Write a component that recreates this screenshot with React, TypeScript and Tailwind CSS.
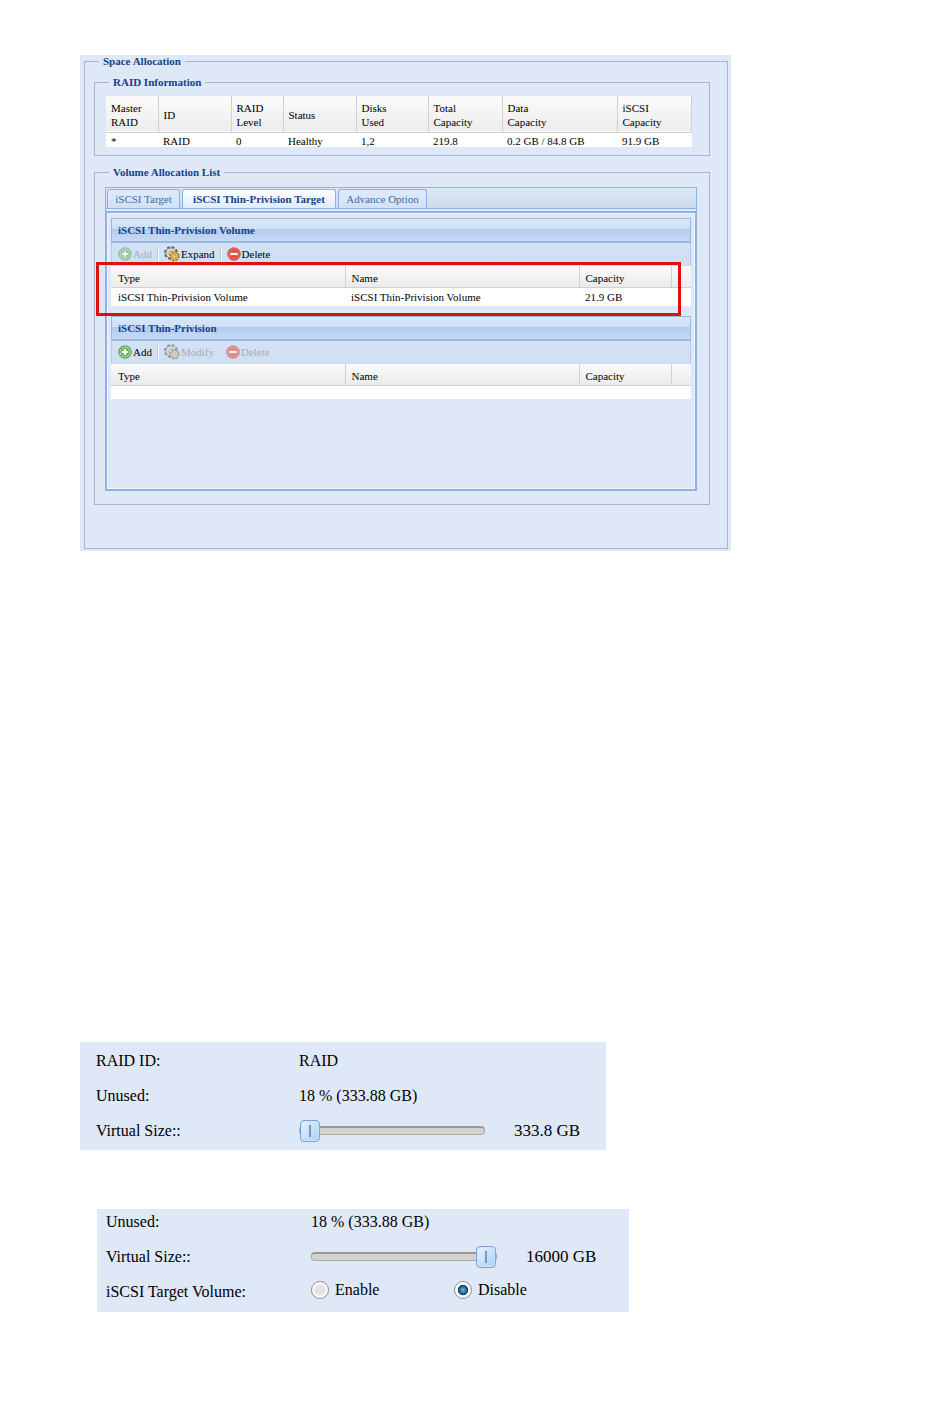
import { useState, type ReactNode } from "react";

const raidColumns = [
  { title: ["Master", "RAID"], value: "*", width: "w-[52px]" },
  { title: ["ID"], value: "RAID", width: "w-[73px]" },
  { title: ["RAID", "Level"], value: "0", width: "w-[52px]" },
  { title: ["Status"], value: "Healthy", width: "w-[73px]" },
  { title: ["Disks", "Used"], value: "1,2", width: "w-[72px]" },
  { title: ["Total", "Capacity"], value: "219.8", width: "w-[74px]" },
  { title: ["Data", "Capacity"], value: "0.2 GB / 84.8 GB", width: "w-[115px]" },
  { title: ["iSCSI", "Capacity"], value: "91.9 GB", width: "" },
];

function AddIcon() {
  return (
    <svg viewBox="0 0 14 14" className="size-[14px]" aria-hidden="true">
      <circle cx="7" cy="7" r="6.3" fill="#4da343" stroke="#6a9d64" strokeWidth="0.8" />
      <circle cx="7" cy="7" r="5" fill="#67b95c" stroke="#c9e8c3" strokeWidth="0.9" />
      <path d="M7 4v6M4 7h6" stroke="#fff" strokeWidth="2" />
    </svg>
  );
}

function DeleteIcon() {
  return (
    <svg viewBox="0 0 14 14" className="size-[14px]" aria-hidden="true">
      <circle cx="7" cy="7" r="6.3" fill="#d93a2b" stroke="#c3594f" strokeWidth="0.8" />
      <circle cx="7" cy="7" r="5.2" fill="#e4503f" stroke="#ee8175" strokeWidth="0.8" />
      <path d="M3.4 7h7.2" stroke="#fff" strokeWidth="2.2" />
    </svg>
  );
}

function GearIcon({ gold }: { gold: boolean }) {
  return (
    <svg viewBox="0 0 16 16" className="size-4" aria-hidden="true">
      <circle cx="7" cy="7" r="5.7" fill="none" stroke="#5f5d57" strokeWidth="2.4" strokeDasharray="2.6 1.88" />
      <circle cx="7" cy="7" r="5.1" fill="#dddbd0" stroke="#85837a" strokeWidth="1" />
      <circle cx="7" cy="7" r="1.9" fill="#f6f5f0" stroke="#85837a" strokeWidth="0.9" />
      <circle cx="10.4" cy="10.2" r="4.2" fill="none" stroke={gold ? "#a06a17" : "#6f6a5c"} strokeWidth="2" strokeDasharray="2 1.3" />
      <circle cx="10.4" cy="10.2" r="3.8" fill={gold ? "#f2b94c" : "#d9cba3"} stroke={gold ? "#c98b27" : "#958a6c"} strokeWidth="0.9" />
      <circle cx="10.4" cy="10.2" r="1.4" fill="#fff" stroke={gold ? "#a8731c" : "#857b60"} strokeWidth="0.7" />
    </svg>
  );
}

function ToolButton({ icon, label, disabled = false }: { icon: ReactNode; label: string; disabled?: boolean }) {
  return (
    <button
      type="button"
      disabled={disabled}
      className="flex items-center gap-px text-black disabled:text-[#a5adb8] disabled:[&>svg]:opacity-60"
    >
      {icon}
      {label}
    </button>
  );
}

function Group({ title, className, children }: { title: string; className: string; children: ReactNode }) {
  return (
    <fieldset className={`min-w-0 border border-[#a9b5cc] ${className}`}>
      <legend className="px-1 font-bold leading-[13px] text-[#15428b]">{title}</legend>
      {children}
    </fieldset>
  );
}

function Panel({ title, tools, children }: { title: string; tools: ReactNode; children: ReactNode }) {
  return (
    <section>
      <h3 className="h-[25px] border border-b-2 border-[#99b8de] bg-[linear-gradient(#dbe8f8_0%,#cddff5_45%,#b3cbeb_46%,#c5daf6_100%)] px-[6px] font-bold leading-[23px] text-[#15428b]">
        {title}
      </h3>
      <div className="flex h-[23px] items-center border-x border-[#b5cbe8] bg-gradient-to-b from-[#d3e2f5] to-[#d0def0] pl-[6px]">
        {tools}
      </div>
      {children}
    </section>
  );
}

function Separator() {
  return <span className="mx-[5px] h-[14px] w-[2px] border-l border-r border-l-[#b4cae6] border-r-white" />;
}

function VolumeTable({ row }: { row?: string[] }) {
  return (
    <table className="w-full table-fixed border-collapse bg-white text-left">
      <thead>
        <tr className="h-[22px] border-b border-[#d0d0d0] bg-gradient-to-b from-[#fbfbfb] to-[#eaebec]">
          <th scope="col" className="border-r border-[#d0d0d0] pl-[7px] pt-[3px] font-normal">Type</th>
          <th scope="col" className="border-r border-[#d0d0d0] pl-[6px] pt-[3px] font-normal">Name</th>
          <th scope="col" className="w-[92px] border-r border-[#d0d0d0] pl-[6px] pt-[3px] font-normal">Capacity</th>
          <td className="w-5" />
        </tr>
      </thead>
      <tbody>
        {row ? (
          <tr className="h-[18px]">
            <td className="pl-[7px]">{row[0]}</td>
            <td className="pl-[6px]">{row[1]}</td>
            <td className="pl-[6px]">{row[2]}</td>
            <td />
          </tr>
        ) : (
          <tr className="h-[13px]">
            <td colSpan={4} />
          </tr>
        )}
      </tbody>
    </table>
  );
}

function Slider({ id, initial }: { id: string; initial: number }) {
  const [value, setValue] = useState(initial);
  return (
    <input
      id={id}
      type="range"
      min={0}
      max={100}
      value={value}
      onChange={(e) => setValue(Number(e.target.value))}
      className="h-[22px] w-[186px] appearance-none bg-transparent [&::-webkit-slider-runnable-track]:h-[9px] [&::-webkit-slider-runnable-track]:rounded-[4px] [&::-webkit-slider-runnable-track]:border [&::-webkit-slider-runnable-track]:border-t-2 [&::-webkit-slider-runnable-track]:border-[#aaaaaa] [&::-webkit-slider-runnable-track]:border-t-[#999999] [&::-webkit-slider-runnable-track]:bg-[#d4d2d0] [&::-webkit-slider-thumb]:mt-[-8px] [&::-webkit-slider-thumb]:h-[22px] [&::-webkit-slider-thumb]:w-5 [&::-webkit-slider-thumb]:appearance-none [&::-webkit-slider-thumb]:rounded-[4px] [&::-webkit-slider-thumb]:border [&::-webkit-slider-thumb]:border-[#7ba3d8] [&::-webkit-slider-thumb]:bg-[linear-gradient(#7597c4,#7597c4),linear-gradient(135deg,#e9f3ff,#a9cdfa)] [&::-webkit-slider-thumb]:bg-[length:2px_12px,100%_100%] [&::-webkit-slider-thumb]:bg-center [&::-webkit-slider-thumb]:bg-no-repeat [&::-webkit-slider-thumb]:shadow-[inset_0_0_0_1px_#cfe3fd]"
    />
  );
}

const radioClass =
  "size-[18px] appearance-none rounded-full border border-[#8b9096] bg-[radial-gradient(circle,#e6e4df_0%,#e6e4df_40%,#ffffff_62%)] checked:bg-[radial-gradient(circle_at_50%_50%,#6fc0e2_0%,#2b83ad_22%,#17405f_42%,#ffffff_50%)]";

const tabs = [
  { label: "iSCSI Target", width: "w-[73px]" },
  { label: "iSCSI Thin-Privision Target", width: "w-[154px]" },
  { label: "Advance Option", width: "w-[89px]" },
];

export default function App() {
  const [active, setActive] = useState(1);
  const [mode, setMode] = useState("disable");

  return (
    <main className="min-h-screen bg-white px-20 pb-[108px] pt-[55px] font-['Liberation_Serif',serif] text-[11px] leading-[14px] text-black">
      <div className="w-full max-w-[651px] bg-[#dfe8f6] pb-[2px] pl-1 pr-[3px]">
        <Group title="Space Allocation" className="pb-[43px] pl-[9px] pr-[17px] [&>legend]:ml-[5px]">
          <Group title="RAID Information" className="mt-2 pb-2 pl-[11px] pr-[17px] [&>legend]:ml-[3px]">
            <table className="mt-[7px] w-full table-fixed border-collapse bg-white text-left">
              <thead>
                <tr className="h-9 border-b border-[#d0d0d0] bg-gradient-to-b from-[#fbfbfb] to-[#ececec]">
                  {raidColumns.map((c) => (
                    <th key={c.title.join(" ")} scope="col" className={`border-r border-[#d0d0d0] pl-[5px] pt-[2px] font-normal ${c.width}`}>
                      {c.title.map((line) => (
                        <span key={line} className="block">{line}</span>
                      ))}
                    </th>
                  ))}
                </tr>
              </thead>
              <tbody>
                <tr>
                  {raidColumns.map((c) => (
                    <td key={c.title.join(" ")} className="whitespace-nowrap pl-[5px] pt-[2px] leading-[12px]">
                      {c.value}
                    </td>
                  ))}
                </tr>
              </tbody>
            </table>
          </Group>

          <Group title="Volume Allocation List" className="mt-[10px] pb-[13px] pl-[10px] pr-3 [&>legend]:ml-1">
            <div className="mt-2 border border-[#8db2e3]">
              <div role="tablist" className="flex h-[21px] items-end gap-[2px] border-b border-[#8db2e3] bg-gradient-to-b from-[#dde8f6] to-[#cbdbef] pl-px">
                {tabs.map((tab, i) => (
                  <button
                    key={tab.label}
                    type="button"
                    role="tab"
                    aria-selected={active === i}
                    onClick={() => setActive(i)}
                    className={`h-[19px] whitespace-nowrap rounded-t-[3px] border border-b-0 border-[#8db2e3] bg-gradient-to-b from-[#dfebfa] to-[#d0e2f8] text-[#416da3] aria-selected:from-white aria-selected:to-[#deecfd] aria-selected:font-bold aria-selected:text-[#15428b] ${tab.width}`}
                  >
                    {tab.label}
                  </button>
                ))}
              </div>
              <div className="h-[2px] bg-[#deecfd]" />
              <div role="tabpanel" className="border border-t-2 border-[#8db2e3]">
                <div className="min-h-[276px] border border-[#eef5ff] px-[3px] pt-1">
                  <Panel
                    title="iSCSI Thin-Privision Volume"
                    tools={
                      <>
                        <ToolButton icon={<AddIcon />} label="Add" disabled />
                        <Separator />
                        <ToolButton icon={<GearIcon gold />} label="Expand" />
                        <Separator />
                        <ToolButton icon={<DeleteIcon />} label="Delete" />
                      </>
                    }
                  >
                    <div className="relative">
                      <VolumeTable row={["iSCSI Thin-Privision Volume", "iSCSI Thin-Privision Volume", "21.9 GB"]} />
                      <div className="pointer-events-none absolute -bottom-[10px] -left-[15px] -top-1 right-[10px] border-[3px] border-[#e01010]" />
                    </div>
                  </Panel>
                  <div className="h-[10px]" />
                  <Panel
                    title="iSCSI Thin-Privision"
                    tools={
                      <>
                        <ToolButton icon={<AddIcon />} label="Add" />
                        <Separator />
                        <ToolButton icon={<GearIcon gold={false} />} label="Modify" disabled />
                        <span className="w-3" />
                        <ToolButton icon={<DeleteIcon />} label="Delete" disabled />
                      </>
                    }
                  >
                    <VolumeTable />
                  </Panel>
                </div>
              </div>
            </div>
          </Group>
        </Group>
      </div>

      <section className="mt-[491px] grid w-full max-w-[526px] auto-rows-[20px] grid-cols-[203px_1fr] items-center gap-y-[15px] bg-[#dfe8f6] pb-[9px] pl-4 pt-[9px] text-base leading-5">
        <span>RAID ID:</span>
        <span>RAID</span>
        <span>Unused:</span>
        <span>18 % (333.88 GB)</span>
        <label htmlFor="size-min">Virtual Size::</label>
        <div className="flex items-center gap-[29px]">
          <Slider id="size-min" initial={0} />
          <output htmlFor="size-min" className="text-[17px]">333.8 GB</output>
        </div>
      </section>

      <section className="ml-[17px] mt-[59px] grid w-full max-w-[532px] auto-rows-[20px] grid-cols-[205px_1fr] items-center gap-y-[15px] bg-[#dfe8f6] pb-[10px] pl-[9px] pt-[3px] text-base leading-5">
        <span>Unused:</span>
        <span>18 % (333.88 GB)</span>
        <label htmlFor="size-max">Virtual Size::</label>
        <div className="flex items-center gap-[29px]">
          <Slider id="size-max" initial={100} />
          <output htmlFor="size-max" className="text-[17px]">16000 GB</output>
        </div>
        <span id="target-volume">iSCSI Target Volume:</span>
        <div role="radiogroup" aria-labelledby="target-volume" className="flex items-center pb-1">
          <label className="flex w-[143px] items-center gap-[6px]">
            <input type="radio" name="target" className={radioClass} checked={mode === "enable"} onChange={() => setMode("enable")} />
            Enable
          </label>
          <label className="flex items-center gap-[6px]">
            <input type="radio" name="target" className={radioClass} checked={mode === "disable"} onChange={() => setMode("disable")} />
            Disable
          </label>
        </div>
      </section>
    </main>
  );
}
